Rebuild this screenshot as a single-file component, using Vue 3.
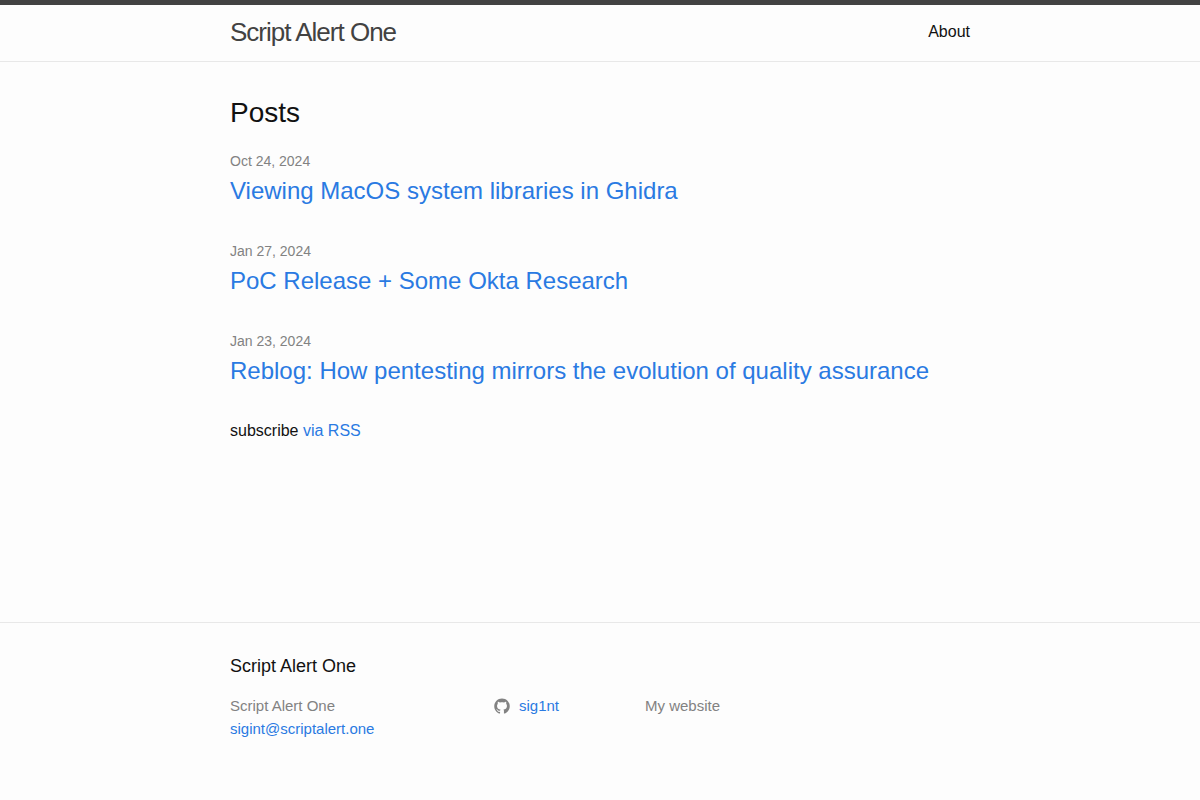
<script setup>
const posts = [
  { date: 'Oct 24, 2024', iso: '2024-10-24', title: 'Viewing MacOS system libraries in Ghidra' },
  { date: 'Jan 27, 2024', iso: '2024-01-27', title: 'PoC Release + Some Okta Research' },
  { date: 'Jan 23, 2024', iso: '2024-01-23', title: 'Reblog: How pentesting mirrors the evolution of quality assurance' },
]
</script>

<template>
  <div class="page">
    <header class="site-header">
      <div class="wrapper header-row">
        <a class="site-title" href="#">Script Alert One</a>
        <nav><a class="nav-link" href="#about">About</a></nav>
      </div>
    </header>

    <main class="content">
      <div class="wrapper">
        <h1 class="heading">Posts</h1>
        <ul class="post-list">
          <li v-for="post in posts" :key="post.iso">
            <time class="post-date" :datetime="post.iso">{{ post.date }}</time>
            <h2 class="post-title"><a href="#post">{{ post.title }}</a></h2>
          </li>
        </ul>
        <p class="subscribe">subscribe <a href="#feed">via RSS</a></p>
      </div>
    </main>

    <footer class="site-footer">
      <div class="wrapper">
        <h2 class="footer-heading">Script Alert One</h2>
        <div class="footer-cols">
          <ul class="contact">
            <li>Script Alert One</li>
            <li><a href="mailto:sigint@scriptalert.one">sigint@scriptalert.one</a></li>
          </ul>
          <ul class="social">
            <li>
              <a href="#github" class="social-link">
                <svg class="icon" viewBox="0 0 16 16" aria-hidden="true">
                  <path d="M7.999,0.431c-4.285,0-7.76,3.474-7.76,7.761c0,3.428,2.223,6.337,5.307,7.363c0.388,0.071,0.53-0.168,0.53-0.374c0-0.184-0.007-0.672-0.01-1.32c-2.159,0.469-2.614-1.04-2.614-1.04c-0.353-0.896-0.862-1.135-0.862-1.135c-0.705-0.481,0.053-0.472,0.053-0.472c0.779,0.055,1.189,0.8,1.189,0.8c0.692,1.186,1.816,0.843,2.258,0.645c0.071-0.502,0.271-0.843,0.493-1.037C4.86,11.425,3.049,10.76,3.049,7.786c0-0.847,0.302-1.54,0.799-2.082C3.768,5.507,3.501,4.718,3.924,3.65c0,0,0.652-0.209,2.134,0.796C6.677,4.273,7.34,4.187,8,4.184c0.659,0.003,1.323,0.089,1.943,0.261c1.482-1.004,2.132-0.796,2.132-0.796c0.423,1.068,0.157,1.857,0.077,2.054c0.497,0.542,0.798,1.235,0.798,2.082c0,2.981-1.814,3.637-3.543,3.829c0.279,0.24,0.527,0.713,0.527,1.437c0,1.037-0.01,1.874-0.01,2.129c0,0.208,0.14,0.449,0.534,0.373c3.081-1.028,5.302-3.935,5.302-7.362C15.76,3.906,12.285,0.431,7.999,0.431z" />
                </svg>
                <span>sig1nt</span>
              </a>
            </li>
          </ul>
          <p class="about">My website</p>
        </div>
      </div>
    </footer>
  </div>
</template>

<style>
body {
  margin: 0;
  background: #fdfdfd;
}
</style>

<style scoped>
.page {
  display: flex;
  flex-direction: column;
  box-sizing: border-box;
  min-height: 100vh;
  background: #fdfdfd;
  color: #111;
  font: 400 16px/24px "Liberation Sans", Arial, sans-serif;
}
.wrapper {
  box-sizing: border-box;
  max-width: 800px;
  margin: 0 auto;
  padding: 0 30px;
}
a {
  color: #2a7ae2;
  text-decoration: none;
}
a:hover {
  text-decoration: underline;
}
h1, h2, p, ul {
  margin: 0;
  padding: 0;
  font-weight: 400;
}
ul {
  list-style: none;
}
.site-header {
  border-top: 5px solid #424242;
  border-bottom: 1px solid #e8e8e8;
}
.header-row {
  display: flex;
  justify-content: space-between;
  line-height: 54px;
  min-height: 56px;
}
.site-title {
  font-size: 26px;
  letter-spacing: -1px;
  color: #424242;
}
.nav-link {
  color: #111;
}
.content {
  flex: 1 0 auto;
  padding: 30px 0;
}
.heading {
  font-size: 28px;
  line-height: 42px;
  margin-bottom: 15px;
}
.post-list li {
  margin-bottom: 30px;
}
.post-date {
  display: block;
  font-size: 14px;
  line-height: 24px;
  color: #828282;
}
.post-title {
  font-size: 24px;
  line-height: 36px;
}
.subscribe {
  margin-bottom: 15px;
}
.site-footer {
  padding: 30px 0;
  border-top: 1px solid #e8e8e8;
}
.footer-heading {
  font-size: 18px;
  line-height: 27px;
  margin-bottom: 14px;
}
.footer-cols {
  display: grid;
  grid-template-columns: 264px 151px 1fr;
  min-height: 76px;
  font-size: 15px;
  line-height: 23px;
  color: #828282;
}
.social-link {
  display: flex;
  align-items: center;
  gap: 9px;
}
.icon {
  width: 16px;
  height: 16px;
  fill: #828282;
}
</style>
